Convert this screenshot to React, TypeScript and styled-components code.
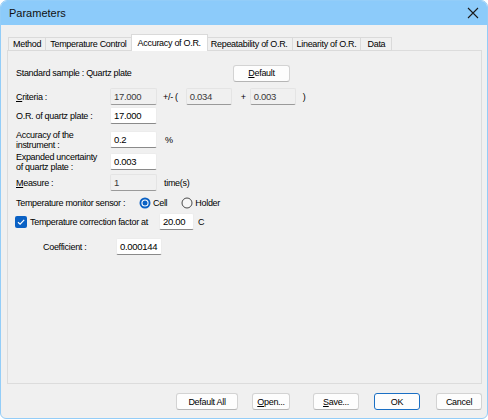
import styled, { createGlobalStyle } from "styled-components";

const GlobalStyle = createGlobalStyle`
  html, body {
    margin: 0;
    padding: 0;
    background: #ffffff;
  }
`;

const uiFont = `"Liberation Sans", Arial, sans-serif`;

export const Window = styled.div`
  width: 488px;
  height: 419px;
  box-sizing: border-box;
  display: flex;
  flex-direction: column;
  background: #f0f0f0;
  border: 1px solid #93cdf8;
  border-radius: 7px 7px 6px 6px;
  overflow: hidden;
  font-family: ${uiFont};
  font-size: 9px;
  letter-spacing: -0.3px;
  color: #000;
`;

export const TitleBar = styled.div`
  height: 24px;
  flex: none;
  display: flex;
  align-items: center;
  justify-content: space-between;
  padding: 0 8px 0 8px;
  background: #8ccbfa;
`;

export const Title = styled.span`
  font-size: 11px;
  letter-spacing: 0;
  color: #111;
`;

export const Body = styled.div`
  flex: 1;
  display: flex;
  flex-direction: column;
  padding: 0 5px 0 6px;
`;

export const TabStrip = styled.div`
  display: flex;
  align-items: flex-end;
  height: 17px;
  margin: 9px 0 0 1px;
  position: relative;
  z-index: 1;
`;

export const Tab = styled.div<{ active?: boolean; pad?: number }>`
  box-sizing: border-box;
  height: ${({ active }) => (active ? 17 : 14)}px;
  padding: 0 ${({ active, pad }) => (active ? 6 : pad ?? 4)}px;
  margin: 0 ${({ active }) => (active ? -1 : 0)}px;
  display: flex;
  align-items: center;
  background: ${({ active }) => (active ? "#ffffff" : "#f0f0f0")};
  border: 1px solid #dadada;
  border-bottom: ${({ active }) => (active ? "none" : "1px solid #dadada")};
  border-left-width: ${({ active }) => (active ? 1 : 0)}px;
  position: relative;
  z-index: ${({ active }) => (active ? 2 : 1)};
  white-space: nowrap;
  &:first-child {
    border-left-width: 1px;
  }
`;

export const Panel = styled.div`
  box-sizing: border-box;
  height: 334px;
  margin-top: -1px;
  border: 1px solid #dcdcdc;
  background: #f0f0f0;
  display: flex;
  flex-direction: column;
  padding-left: 8px;
`;

export const Row = styled.div<{ mt: number; h?: number }>`
  display: flex;
  align-items: center;
  margin-top: ${({ mt }) => mt}px;
  height: ${({ h }) => h ?? 17}px;
  white-space: nowrap;
`;

export const Label = styled.span<{ w?: number; ml?: number }>`
  width: ${({ w }) => (w ? `${w}px` : "auto")};
  margin-left: ${({ ml }) => ml ?? 0}px;
  flex: none;
  line-height: 10px;
  white-space: nowrap;
`;

export const TopLabel = styled(Label)`
  align-self: flex-start;
  margin-top: -1px;
  white-space: pre-line;
`;

export const Field = styled.div<{ w: number; ml?: number; readOnly?: boolean }>`
  box-sizing: border-box;
  width: ${({ w }) => w}px;
  height: 17px;
  margin-left: ${({ ml }) => ml ?? 0}px;
  flex: none;
  display: flex;
  align-items: center;
  padding: 0 3px 1px;
  background: ${({ readOnly }) => (readOnly ? "#f0f0f0" : "#ffffff")};
  border: 1px solid ${({ readOnly }) => (readOnly ? "#e4e4e4" : "#ececec")};
  border-bottom: 1px solid ${({ readOnly }) => (readOnly ? "#9a9a9a" : "#8a8a8a")};
  border-radius: 2px;
  color: ${({ readOnly }) => (readOnly ? "#3a3a3a" : "#000")};
  font-size: 9.5px;
`;

export const Button = styled.button<{ w: number; primary?: boolean; ml?: number }>`
  box-sizing: border-box;
  width: ${({ w }) => w}px;
  height: 17px;
  margin-left: ${({ ml }) => ml ?? 0}px;
  padding: 0;
  flex: none;
  font-family: ${uiFont};
  font-size: 9px;
  letter-spacing: -0.3px;
  color: #000;
  background: #fdfdfd;
  border: 1px solid ${({ primary }) => (primary ? "#1a6fc4" : "#d3d3d3")};
  border-bottom-color: ${({ primary }) => (primary ? "#1a6fc4" : "#b5b5b5")};
  border-radius: 3px;
`;

export const Footer = styled.div`
  display: flex;
  justify-content: flex-end;
  margin-top: 9px;
`;

export const Radio = styled.span<{ ml: number }>`
  display: inline-flex;
  align-items: center;
  margin-left: ${({ ml }) => ml}px;
  gap: 2px;
`;

export const Check = styled.span`
  display: inline-flex;
  margin-left: -1px;
  margin-right: 3px;
`;

const CloseIcon = () => (
  <svg width="12" height="12" viewBox="0 0 12 12">
    <path d="M1 1 L11 11 M11 1 L1 11" stroke="#1b1b1b" strokeWidth="1.1" fill="none" />
  </svg>
);

const RadioMark = ({ on }: { on?: boolean }) =>
  on ? (
    <svg width="12" height="12" viewBox="0 0 12 12">
      <circle cx="6" cy="6" r="5.5" fill="#0a61c4" />
      <circle cx="6" cy="6" r="3.6" fill="#ffffff" />
      <circle cx="6" cy="6" r="2.5" fill="#0a61c4" />
    </svg>
  ) : (
    <svg width="12" height="12" viewBox="0 0 12 12">
      <circle cx="6" cy="6" r="5" fill="#f7f7f7" stroke="#4a4a4a" strokeWidth="1" />
    </svg>
  );

const CheckMark = () => (
  <svg width="12" height="12" viewBox="0 0 12 12">
    <rect x="0" y="0" width="12" height="12" rx="2" fill="#0a61c4" />
    <path d="M3 6.2 L5.1 8.2 L9.2 3.8" stroke="#ffffff" strokeWidth="1.2" fill="none" />
  </svg>
);

const tabs = [
  "Method",
  "Temperature Control",
  "Accuracy of O.R.",
  "Repeatability of O.R.",
  "Linearity of O.R.",
  "Data",
];

export default function App() {
  return (
    <>
      <GlobalStyle />
      <Window>
        <TitleBar>
          <Title>Parameters</Title>
          <CloseIcon />
        </TitleBar>
        <Body>
          <TabStrip>
            {tabs.map((t) => (
              <Tab key={t} active={t === "Accuracy of O.R."} pad={t === "Data" ? 6 : 4}>
                {t}
              </Tab>
            ))}
          </TabStrip>
          <Panel>
            <Row mt={14} h={16}>
              <Label w={217}>Standard sample : Quartz plate</Label>
              <Button w={57}>
                <u>D</u>efault
              </Button>
            </Row>
            <Row mt={7}>
              <Label w={94}>
                <u>C</u>riteria :
              </Label>
              <Field w={47} readOnly>
                17.000
              </Field>
              <Label ml={6}>+/- (</Label>
              <Field w={46} ml={8} readOnly>
                0.034
              </Field>
              <Label ml={9}>+</Label>
              <Field w={46} ml={4} readOnly>
                0.003
              </Field>
              <Label ml={7}>)</Label>
            </Row>
            <Row mt={2}>
              <Label w={94}>O.R. of quartz plate :</Label>
              <Field w={47}>17.000</Field>
            </Row>
            <Row mt={7}>
              <TopLabel w={94}>{"Accuracy of the\ninstrument :"}</TopLabel>
              <Field w={47}>0.2</Field>
              <Label ml={8}>%</Label>
            </Row>
            <Row mt={5}>
              <TopLabel w={94}>{"Expanded uncertainty\nof quartz plate :"}</TopLabel>
              <Field w={47}>0.003</Field>
            </Row>
            <Row mt={4}>
              <Label w={94}>
                <u>M</u>easure :
              </Label>
              <Field w={47} readOnly>
                1
              </Field>
              <Label ml={7}>time(s)</Label>
            </Row>
            <Row mt={6} h={12}>
              <Label w={123}>Temperature monitor sensor :</Label>
              <Radio ml={0}>
                <RadioMark on />
                Cell
              </Radio>
              <Radio ml={14}>
                <RadioMark />
                Holder
              </Radio>
            </Row>
            <Row mt={4}>
              <Check>
                <CheckMark />
              </Check>
              <Label w={129}>Temperature correction factor at</Label>
              <Field w={35}>20.00</Field>
              <Label ml={4}>C</Label>
            </Row>
            <Row mt={8}>
              <Label w={73} ml={27}>
                Coefficient :
              </Label>
              <Field w={46}>0.000144</Field>
            </Row>
          </Panel>
          <Footer>
            <Button w={62}>Default All</Button>
            <Button w={38} ml={14}>
              <u>O</u>pen...
            </Button>
            <Button w={46} ml={23}>
              <u>S</u>ave...
            </Button>
            <Button w={46} ml={15} primary>
              OK
            </Button>
            <Button w={46} ml={16}>
              Cancel
            </Button>
          </Footer>
        </Body>
      </Window>
    </>
  );
}
